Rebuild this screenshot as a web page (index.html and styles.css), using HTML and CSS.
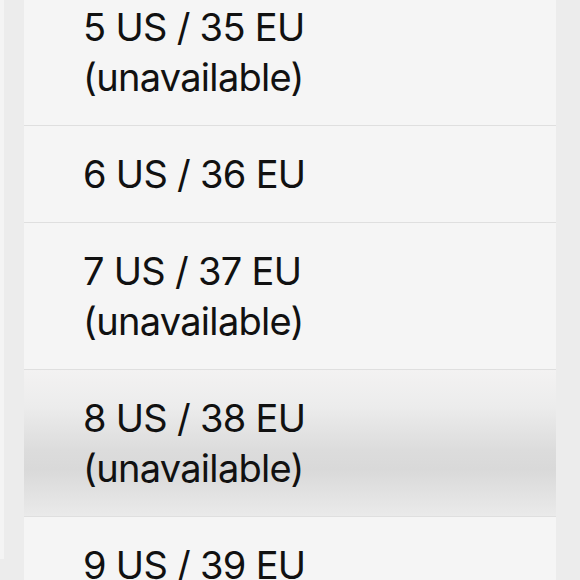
FILE: index.html
```html
<!DOCTYPE html>
<html>
<head>
	<title>Select size</title>
	<link rel="stylesheet" href="styles.css">
</head>
<body>
<div class="sheet">
	<ul class="sizes">
		<li class="size">5 US / 35 EU<br>(unavailable)</li>
		<li class="size">6 US / 36 EU</li>
		<li class="size">7 US / 37 EU<br>(unavailable)</li>
		<li class="size pressed">8 US / 38 EU<br>(unavailable)</li>
		<li class="size">9 US / 39 EU</li>
	</ul>
</div>
</body>
</html>
```

FILE: styles.css
```css
html, body {
	margin: 0;
	height: 100%;
	overflow: hidden;
}

body {
	background-color: #ececec;
	font-family: Inter, "Liberation Sans", sans-serif;
}

.sheet {
	height: 100%;
	border-left: 4px solid #f4f4f4;
	padding: 0 24px 0 20px;
}

.sizes {
	list-style: none;
	margin: -21px 0 0 0;
	padding: 0;
	background-color: #f5f5f5;
	min-height: 100%;
}

.size {
	padding: 23px 0 23px 59px;
	font-size: 38px;
	line-height: 50px;
	letter-spacing: -0.7px;
	color: #111;
	border-bottom: 1px solid #dfdfdf;
}

.size.pressed {
	background: linear-gradient(#f3f2f2 0%, #ececec 25%, #dcdcdc 55%, #d9d9d9 68%, #e2e2e2 85%, #eaeaea 100%);
}
```
